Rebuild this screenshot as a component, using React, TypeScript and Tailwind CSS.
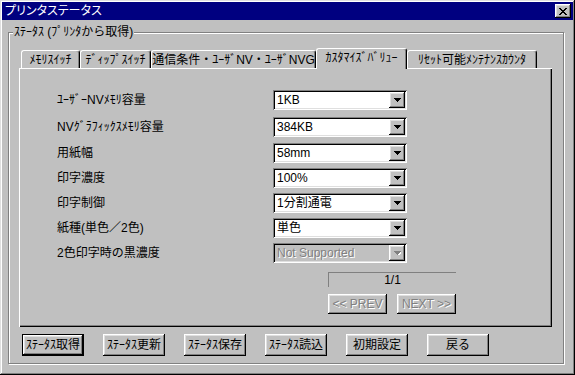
import React from "react"

// Win95-style "printer status" dialog, custom values tab selected.

const FONT = "font-['Liberation_Sans','Noto_Sans_CJK_JP',sans-serif]"
const RAISED =
  "shadow-[inset_-1px_-1px_0_#000,inset_1px_1px_0_#fff,inset_-2px_-2px_0_#808080,inset_2px_2px_0_#dfdfdf]"
const SUNKEN =
  "shadow-[inset_1px_1px_0_#808080,inset_-1px_-1px_0_#fff,inset_2px_2px_0_#000,inset_-2px_-2px_0_#dfdfdf]"
const GRAYED = "text-[#808080] [text-shadow:1px_1px_0_#fff]"

const tabs = [
  { label: "ﾒﾓﾘｽｲｯﾁ", w: "w-[59px]" },
  { label: "ﾃﾞｨｯﾌﾟｽｲｯﾁ", w: "w-[71px]" },
  { label: "通信条件・ﾕｰｻﾞNV・ﾕｰｻﾞNVG", w: "w-[165px]" },
  { label: "ｶｽﾀﾏｲｽﾞﾊﾞﾘｭｰ", w: "w-[91px]", active: true },
  { label: "ﾘｾｯﾄ可能ﾒﾝﾃﾅﾝｽｶｳﾝﾀ", w: "w-[130px]" },
]

const rows = [
  { label: "ﾕｰｻﾞｰNVﾒﾓﾘ容量", value: "1KB", gap: "mt-0" },
  { label: "NVｸﾞﾗﾌｨｯｸｽﾒﾓﾘ容量", value: "384KB", gap: "mt-[7px]" },
  { label: "用紙幅", value: "58mm", gap: "mt-[6px]" },
  { label: "印字濃度", value: "100%", gap: "mt-[5px]" },
  { label: "印字制御", value: "1分割通電", gap: "mt-[5px]" },
  { label: "紙種(単色／2色)", value: "単色", gap: "mt-[5px]" },
  { label: "2色印字時の黒濃度", value: "Not Supported", gap: "mt-[5px]", disabled: true },
]

const buttons = ["ｽﾃｰﾀｽ取得", "ｽﾃｰﾀｽ更新", "ｽﾃｰﾀｽ保存", "ｽﾃｰﾀｽ読込", "初期設定", "戻る"]

function Combo({ value, disabled }: { value: string; disabled?: boolean }) {
  return (
    <div
      className={`w-[134px] h-[20px] flex items-center ${SUNKEN} ${
        disabled ? "bg-[#c0c0c0]" : "bg-white"
      }`}
    >
      <span className={`flex-1 pl-[4px] truncate ${disabled ? GRAYED : "text-black"}`}>{value}</span>
      <span className={`w-[16px] h-[16px] mr-[2px] bg-[#c0c0c0] flex items-center justify-center ${RAISED}`}>
        <svg width="7" height="4" viewBox="0 0 7 4" shapeRendering="crispEdges">
          {disabled && <polygon points="1,1 8,1 4.5,5" fill="#fff" />}
          <polygon points="0,0 7,0 3.5,4" fill={disabled ? "#808080" : "#000"} />
        </svg>
      </span>
    </div>
  )
}

export default function App() {
  return (
    <div
      className={`w-[575px] h-[375px] bg-[#c0c0c0] p-[2px] text-[12px] leading-[14px] text-black ${FONT} shadow-[inset_-1px_-1px_0_#000,inset_1px_1px_0_#dfdfdf,inset_-2px_-2px_0_#808080,inset_2px_2px_0_#fff]`}
    >
      {/* title bar */}
      <div className="h-[18px] bg-[#000080] flex items-center justify-between pl-[3px] pr-[2px]">
        <span className="text-white [font-feature-settings:'palt']">プリンタステータス</span>
        <button className={`w-[16px] h-[14px] bg-[#c0c0c0] flex items-center justify-center ${RAISED}`}>
          <svg width="8" height="7" viewBox="0 0 8 7" shapeRendering="crispEdges">
            <path d="M0 0h2v1h-2zM6 0h2v1h-2zM1 1h2v1h-2zM5 1h2v1h-2zM2 2h4v1h-4zM3 3h2v1h-2zM2 4h4v1h-4zM1 5h2v1h-2zM5 5h2v1h-2zM0 6h2v1h-2zM6 6h2v1h-2z" fill="#000" />
          </svg>
        </button>
      </div>

      {/* status group */}
      <fieldset className="ml-[6px] mt-[5px] w-[556px] h-[339px] border border-[#808080] shadow-[inset_1px_1px_0_#fff,1px_1px_0_#fff]">
        <legend className="ml-[4px] px-[1px] bg-[#c0c0c0]">ｽﾃｰﾀｽ (ﾌﾟﾘﾝﾀから取得)</legend>

        <div className="ml-[10px] mt-[9px] w-[533px]">
          {/* tab strip */}
          <div className="h-[20px] flex items-end pl-[2px]">
            {tabs.map((t) =>
              t.active ? (
                <div
                  key={t.label}
                  className={`${t.w} h-[21px] -mb-px relative z-10 bg-[#c0c0c0] border-t border-l border-r border-t-white border-l-white border-r-black rounded-t-[3px] shadow-[inset_-1px_0_0_#808080] flex items-center justify-center pb-[2px] whitespace-nowrap`}
                >
                  {t.label}
                </div>
              ) : (
                <div
                  key={t.label}
                  className={`${t.w} h-[18px] bg-[#c0c0c0] border-t border-l border-r border-t-white border-l-white border-r-black rounded-t-[3px] shadow-[inset_-1px_0_0_#808080] flex items-center justify-center whitespace-nowrap`}
                >
                  {t.label}
                </div>
              )
            )}
          </div>

          {/* tab panel */}
          <div className="h-[259px] pt-[22px] pl-[38px] shadow-[inset_1px_1px_0_#fff,inset_-1px_-1px_0_#000,inset_-2px_-2px_0_#808080]">
            {rows.map((r) => (
              <div key={r.label} className={`flex items-center h-[20px] ${r.gap}`}>
                <span className="w-[216px] whitespace-nowrap">{r.label}</span>
                <Combo value={r.value} disabled={r.disabled} />
              </div>
            ))}

            <div className="ml-[271px] mt-[9px] w-[128px]">
              <div className="h-[15px] border-t border-l border-[#808080] border-b-white border-r-white flex items-center justify-center">
                1/1
              </div>
              <div className="mt-[7px] flex gap-[10px]">
                <button className={`w-[60px] h-[20px] bg-[#c0c0c0] ${RAISED} ${GRAYED}`}>&lt;&lt; PREV</button>
                <button className={`w-[60px] h-[20px] bg-[#c0c0c0] ${RAISED} ${GRAYED}`}>NEXT &gt;&gt;</button>
              </div>
            </div>
          </div>
        </div>

        {/* command buttons */}
        <div className="ml-[13px] mt-[7px] flex gap-[19px]">
          {buttons.map((b, i) =>
            i === 0 ? (
              <div key={b} className="w-[62px] h-[22px] border border-black flex">
                <button className={`flex-1 bg-[#c0c0c0] ${RAISED}`}>{b}</button>
              </div>
            ) : (
              <button key={b} className={`w-[62px] h-[22px] bg-[#c0c0c0] ${RAISED}`}>
                {b}
              </button>
            )
          )}
        </div>
      </fieldset>
    </div>
  )
}
